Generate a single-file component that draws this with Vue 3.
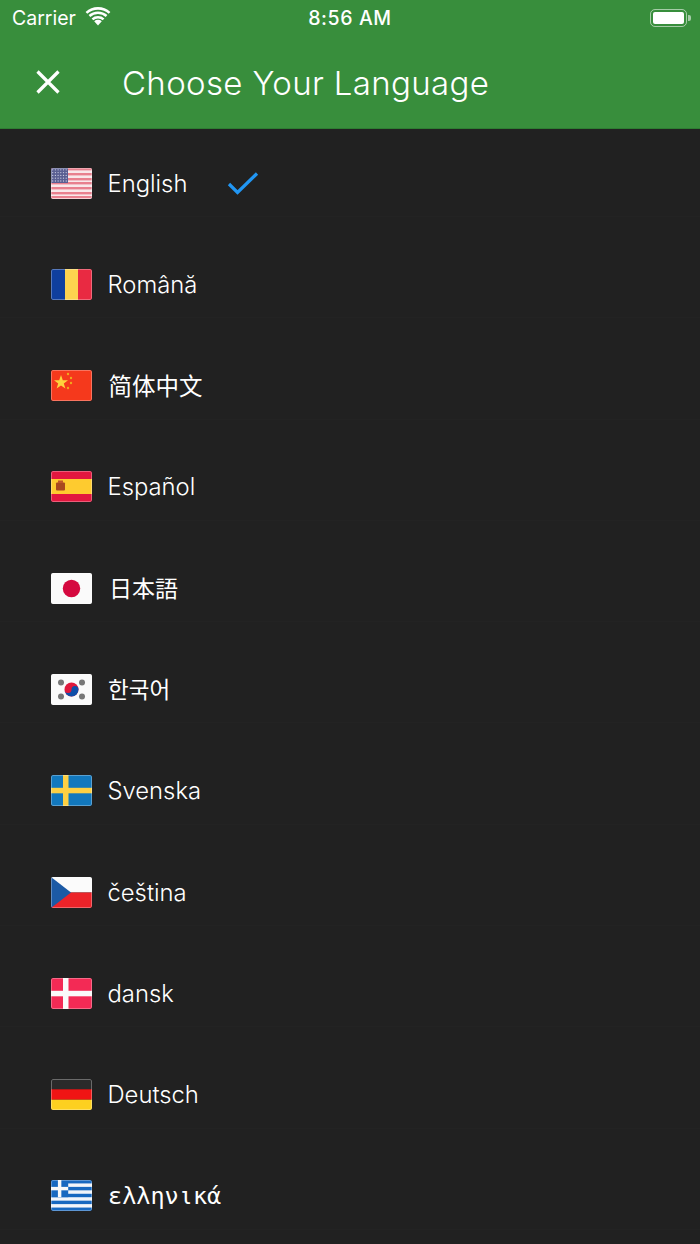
<template>
  <div class="page">
    <header class="top">
      <div class="status">
        <div class="status-left">
          <span>Carrier</span>
          <svg class="wifi" viewBox="0 0 26 19" width="26" height="19">
            <path d="M13 18.5 9.2 14.2a5.6 5.6 0 0 1 7.6 0Z" fill="#fff" />
            <path d="M6.6 11.4a9.5 9.5 0 0 1 12.8 0l-1.7 1.9a7 7 0 0 0-9.4 0Z" fill="#fff" />
            <path d="M3.6 8.1a14 14 0 0 1 18.8 0l-1.7 1.9a11.4 11.4 0 0 0-15.4 0Z" fill="#fff" />
            <path d="M.6 4.9a18.4 18.4 0 0 1 24.8 0l-1.7 1.9a15.9 15.9 0 0 0-21.4 0Z" fill="#fff" />
          </svg>
        </div>
        <span class="clock">8:56 AM</span>
        <div class="battery">
          <div class="battery-shell"><div class="battery-fill"></div></div>
          <div class="battery-tip"></div>
        </div>
      </div>
      <div class="titlebar">
        <svg class="close" viewBox="0 0 24 24" width="24" height="24">
          <path d="M1.5 1.5 22.5 22.5M22.5 1.5 1.5 22.5" stroke="#fff" stroke-width="3.2" fill="none" />
        </svg>
        <h1>Choose Your Language</h1>
      </div>
    </header>

    <ul class="langs">
      <li v-for="lang in languages" :key="lang.code" class="lang">
        <svg class="flag" viewBox="0 0 41 31" width="41" height="31">
          <g v-if="lang.code === 'us'">
            <rect width="41" height="31" fill="#f8e8ea" />
            <rect v-for="y in [0, 5, 10, 14, 19, 24, 28]" :key="y" y="0" width="41" height="2.4" :transform="`translate(0 ${y})`" fill="#e8808e" />
            <rect width="17" height="15" fill="#5a5f92" />
            <g fill="#c9cbe0">
              <template v-for="r in 5" :key="r">
                <circle v-for="c in 6" :key="c" :cx="c * 2.7 - 1" :cy="r * 2.8 - 1" r="0.65" />
              </template>
            </g>
          </g>
          <g v-else-if="lang.code === 'ro'">
            <rect width="14" height="31" fill="#0f3f9e" />
            <rect x="14" width="13" height="31" fill="#fdd34f" />
            <rect x="27" width="14" height="31" fill="#e92a42" />
          </g>
          <g v-else-if="lang.code === 'cn'">
            <rect width="41" height="31" fill="#f5391c" />
            <polygon points="10,5 11.8,10.2 17,10.2 12.8,13.4 14.4,18.4 10,15.4 5.6,18.4 7.2,13.4 3,10.2 8.2,10.2" fill="#fed33c" />
            <g fill="#f0a81e">
              <circle cx="17" cy="4" r="1.2" />
              <circle cx="20" cy="8" r="1.2" />
              <circle cx="20" cy="13" r="1.2" />
              <circle cx="17" cy="18" r="1.2" />
            </g>
          </g>
          <g v-else-if="lang.code === 'es'">
            <rect width="41" height="31" fill="#e2173f" />
            <rect y="8" width="41" height="15" fill="#fecb2f" />
            <rect x="5" y="11.5" width="9" height="8" rx="1" fill="#a8491f" />
            <rect x="7" y="9.5" width="5" height="2.5" fill="#c0562a" />
          </g>
          <g v-else-if="lang.code === 'ja'">
            <rect width="41" height="31" fill="#fafafa" />
            <circle cx="20.5" cy="15.5" r="8.7" fill="#d5093f" />
          </g>
          <g v-else-if="lang.code === 'ko'">
            <rect width="41" height="31" fill="#fafafa" />
            <circle cx="20.5" cy="15.5" r="7" fill="#e0183c" />
            <path d="M13.5 15.5a3.5 3.5 0 0 0 7 0 3.5 3.5 0 0 1 7 0 7 7 0 0 1-14 0Z" fill="#0f4ea8" />
            <g fill="#777">
              <circle cx="10" cy="8.5" r="3" />
              <circle cx="31" cy="8.5" r="3" />
              <circle cx="10" cy="22.5" r="3" />
              <circle cx="31" cy="22.5" r="3" />
            </g>
          </g>
          <g v-else-if="lang.code === 'sv'">
            <rect width="41" height="31" fill="#1278bd" />
            <rect x="12" width="5.5" height="31" fill="#fdd043" />
            <rect y="12.8" width="41" height="5.5" fill="#fdd043" />
          </g>
          <g v-else-if="lang.code === 'cs'">
            <rect width="41" height="15.5" fill="#fbfbfb" />
            <rect y="15.5" width="41" height="15.5" fill="#ec2329" />
            <polygon points="0,0 20,15.5 0,31" fill="#1c5aa5" />
          </g>
          <g v-else-if="lang.code === 'da'">
            <rect width="41" height="31" fill="#f32a55" />
            <rect x="12" width="5.5" height="31" fill="#fafafa" />
            <rect y="12.8" width="41" height="5.5" fill="#fafafa" />
          </g>
          <g v-else-if="lang.code === 'de'">
            <rect width="41" height="10.3" fill="#2a2a2a" />
            <rect y="10.3" width="41" height="10.4" fill="#f01414" />
            <rect y="20.7" width="41" height="10.3" fill="#fdd020" />
          </g>
          <g v-else>
            <rect width="41" height="31" fill="#1768c0" />
            <rect v-for="y in [3.44, 10.33, 17.22, 24.11]" :key="y" width="41" height="3.44" :transform="`translate(0 ${y})`" fill="#f2f5fa" />
            <rect width="17.2" height="17.2" fill="#1768c0" />
            <rect x="6.9" width="3.44" height="17.2" fill="#f8f8f8" />
            <rect y="6.88" width="17.2" height="3.44" fill="#f8f8f8" />
          </g>
          <rect x="0.5" y="0.5" width="40" height="30" rx="1.5" fill="none" stroke="#fff" stroke-opacity="0.3" />
        </svg>
        <span class="name" :class="lang.fontClass">{{ lang.name }}</span>
        <svg v-if="lang.selected" class="check" viewBox="0 0 32 24" width="32" height="24">
          <path d="M2 13 10.5 21.5 30 2.5" stroke="#2196f3" stroke-width="3.2" fill="none" />
        </svg>
      </li>
    </ul>
  </div>
</template>

<script setup>
const languages = [
  { code: 'us', name: 'English', selected: true },
  { code: 'ro', name: 'Română' },
  { code: 'cn', name: '简体中文', fontClass: 'sc' },
  { code: 'es', name: 'Español' },
  { code: 'ja', name: '日本語', fontClass: 'jp' },
  { code: 'ko', name: '한국어', fontClass: 'kr' },
  { code: 'sv', name: 'Svenska' },
  { code: 'cs', name: 'čeština' },
  { code: 'da', name: 'dansk' },
  { code: 'de', name: 'Deutsch' },
  { code: 'el', name: 'ελληνικά', fontClass: 'mono' },
]
</script>

<style>
html, body { margin: 0; background: #212121; }
</style>

<style scoped>
.page { width: 700px; height: 1244px; overflow: hidden; background: #212121; color: #fff; font-family: Inter, "Open Sans", sans-serif; }
.top { height: 128px; background: #388e3c; border-bottom: 1px solid #2e7d32; }
.status { height: 36px; position: relative; display: flex; align-items: center; justify-content: space-between; padding: 0 9px 0 12px; font-family: Inter, Roboto, sans-serif; font-size: 19.5px; }
.status-left { display: flex; align-items: center; gap: 9px; }
.wifi { margin-top: -4px; }
.clock { position: absolute; left: 0; right: 0; text-align: center; font-weight: 500; letter-spacing: 0.6px; }
.battery { display: flex; align-items: center; gap: 1px; }
.battery-shell { width: 37px; height: 18px; padding: 2px; box-sizing: border-box; border: 1px solid rgba(255, 255, 255, 0.55); border-radius: 5px; }
.battery-fill { height: 100%; background: #fff; border-radius: 2px; }
.battery-tip { width: 3px; height: 6px; background: rgba(255, 255, 255, 0.55); border-radius: 0 2px 2px 0; }
.titlebar { height: 92px; display: flex; align-items: center; padding-left: 36px; }
.close { flex: none; }
h1 { margin: 2px 0 0 62px; font-size: 33px; font-weight: 300; letter-spacing: 0.35px; }
.langs { list-style: none; margin: 0; padding: 21px 0 0; }
.lang { height: 67px; margin-bottom: 34.3px; display: flex; align-items: center; padding-left: 51px; border-bottom: 1px solid #232323; box-sizing: border-box; }
.flag { flex: none; border-radius: 2px; }
.name { margin-left: 15.5px; font-size: 23.8px; font-weight: 300; }
.sc { font-family: "Noto Sans CJK SC", sans-serif; font-size: 23.5px; font-weight: 400; margin: -2px 0 0 16.5px; }
.jp { font-family: "Noto Sans CJK JP", sans-serif; font-size: 23px; font-weight: 400; margin: -2px 0 0 17px; }
.kr { font-family: "Noto Sans CJK KR", sans-serif; font-size: 22.5px; font-weight: 400; margin: -2px 0 0 16px; }
.mono { font-family: "DejaVu Sans Mono", monospace; font-size: 23.5px; font-weight: 400; margin-left: 16px; }
.check { margin-left: 40px; }
</style>
